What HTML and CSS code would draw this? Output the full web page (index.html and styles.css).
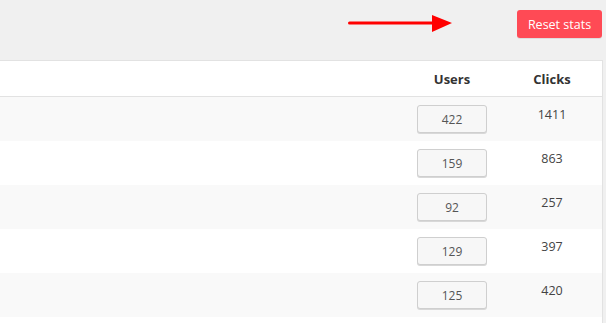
FILE: index.html
```html
<!DOCTYPE html>
<html>
<head>
<meta charset="utf-8">
<link rel="stylesheet" href="styles.css">
</head>
<body>
<div class="topbar">
  <svg class="arrow" width="104" height="18" viewBox="0 0 104 18">
    <rect x="0" y="6.5" width="86" height="3" rx="1.5" fill="#ff0000"/>
    <polygon points="84,0 104,8 84,17" fill="#ff0000"/>
  </svg>
  <button class="reset">Reset stats</button>
</div>
<div class="panel">
  <table class="stats">
    <thead>
      <tr><th class="name"></th><th class="num">Users</th><th class="num">Clicks</th></tr>
    </thead>
    <tbody>
      <tr class="alt"><td></td><td class="users"><span class="ubtn">422</span></td><td class="clicks">1411</td></tr>
      <tr><td></td><td class="users"><span class="ubtn">159</span></td><td class="clicks">863</td></tr>
      <tr class="alt"><td></td><td class="users"><span class="ubtn">92</span></td><td class="clicks">257</td></tr>
      <tr><td></td><td class="users"><span class="ubtn">129</span></td><td class="clicks">397</td></tr>
      <tr class="alt"><td></td><td class="users"><span class="ubtn">125</span></td><td class="clicks">420</td></tr>
    </tbody>
  </table>
</div>
</body>
</html>
```

FILE: styles.css
```css
html, body {
  margin: 0;
  padding: 0;
  background: #f0f0f0;
  font-family: "Open Sans", "Noto Sans", sans-serif;
  color: #444;
  overflow: hidden;
}
.topbar {
  height: 60px;
  display: flex;
  justify-content: flex-end;
  align-items: flex-start;
  padding-right: 4px;
  box-sizing: border-box;
}
.arrow {
  margin-top: 15px;
  margin-right: 65px;
  display: block;
}
.reset {
  margin-top: 10px;
  width: 85px;
  height: 28px;
  border: none;
  border-radius: 3px;
  background: #ff4a55;
  color: #fff;
  font-family: "Open Sans", "Noto Sans", sans-serif;
  font-size: 12.5px;
  padding: 0;
  box-shadow: 0 1px 0 rgba(0,0,0,0.08);
}
.panel {
  width: calc(100% - 3px);
  box-sizing: border-box;
  background: #fff;
  border-top: 1px solid #e2e2e2;
  border-right: 1px solid #e2e2e2;
  height: 270px;
}
.stats {
  width: 100%;
  border-collapse: collapse;
}
.stats th {
  height: 35px;
  padding: 0;
  border-bottom: 1px solid #e2e2e2;
  font-size: 13px;
  font-weight: 700;
  color: #333;
  vertical-align: middle;
}
.stats th.num {
  width: 100px;
}
.stats td {
  height: 44px;
  padding: 8px 0 0 0;
  box-sizing: border-box;
  vertical-align: top;
  text-align: center;
  font-size: 12px;
  line-height: 17px;
}
.stats td.clicks {
  padding-top: 9px;
  font-size: 12.5px;
  color: #444;
}
.stats tr.alt td {
  background: #f9f9f9;
}
.ubtn {
  display: inline-block;
  width: 70px;
  height: 28px;
  box-sizing: border-box;
  border: 1px solid #cfcfcf;
  border-radius: 3px;
  background: #f7f7f7;
  box-shadow: 0 1px 0 #d8d8d8;
  line-height: 26px;
  font-size: 12px;
  color: #555;
  padding-top: 1px;
}
```
